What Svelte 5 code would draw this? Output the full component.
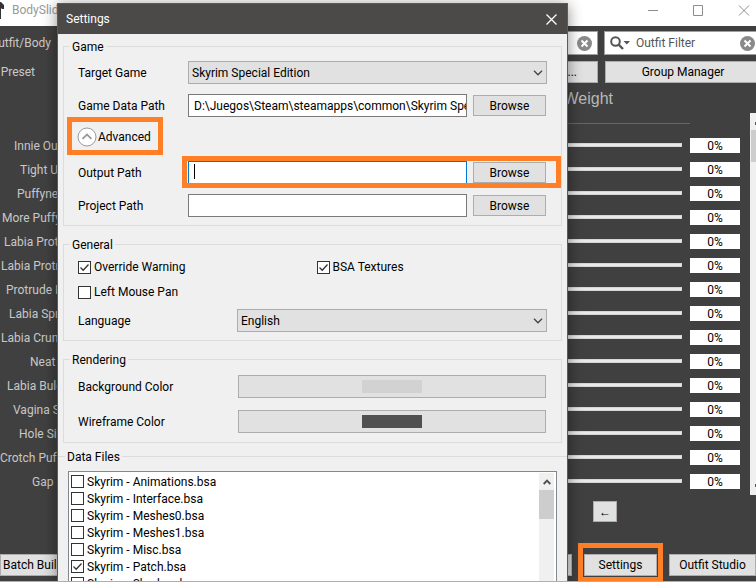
<script>
  const sliders = [
    { name: 'Innie Ou', indent: 14 },
    { name: 'Tight U', indent: 20 },
    { name: 'Puffyne', indent: 17 },
    { name: 'More Puffy', indent: 2 },
    { name: 'Labia Prot', indent: 4 },
    { name: 'Labia Protr', indent: 1 },
    { name: 'Protrude I', indent: 6 },
    { name: 'Labia Spr', indent: 9 },
    { name: 'Labia Crun', indent: 1 },
    { name: 'Neat', indent: 30 },
    { name: 'Labia Bulg', indent: 7 },
    { name: 'Vagina S', indent: 13 },
    { name: 'Hole Si', indent: 19 },
    { name: 'Crotch Puff', indent: 0 },
    { name: 'Gap', indent: 32 }
  ];
  const files = [
    { name: 'Skyrim - Animations.bsa', on: false },
    { name: 'Skyrim - Interface.bsa', on: false },
    { name: 'Skyrim - Meshes0.bsa', on: false },
    { name: 'Skyrim - Meshes1.bsa', on: false },
    { name: 'Skyrim - Misc.bsa', on: false },
    { name: 'Skyrim - Patch.bsa', on: true },
    { name: 'Skyrim - Shaders.bsa', on: false }
  ];
</script>

{#snippet chevron()}
  <svg class="chevron" width="10" height="6" viewBox="0 0 10 6" aria-hidden="true">
    <path d="M1 .8 5 4.8 9 .8" fill="none" stroke="#444" stroke-width="1.3" />
  </svg>
{/snippet}

{#snippet clear()}
  <svg width="15" height="15" viewBox="0 0 15 15" aria-hidden="true">
    <circle cx="7.5" cy="7.5" r="7.5" fill="#8a8a8a" />
    <path d="M4.5 4.5l6 6M10.5 4.5l-6 6" stroke="#fff" stroke-width="2" />
  </svg>
{/snippet}

<div class="screen">
  <main class="app">
    <header class="appbar">
      <svg width="4" height="18" viewBox="0 0 4 18" aria-hidden="true">
        <path d="M0 0h1l3 3v4H2L1 6v11H0z" fill="#333" />
      </svg>
      <span class="apptitle">BodySlide</span>
      <svg class="wincontrols" width="102" height="12" viewBox="0 0 102 12" fill="none" stroke="#8c8c8c" aria-hidden="true">
        <path d="M0 5.5h10M45.500 .5h9v10h-9zM91 .5l10 10M101 .5l-10 10" />
      </svg>
    </header>

    <div class="toprow">
      <span class="side outfit">Outfit/Body</span>
      <div class="search first">
        <input aria-label="Outfit" />
        <button class="bare" aria-label="Clear outfit">{@render clear()}</button>
      </div>
      <div class="search second">
        <svg width="20" height="14" viewBox="0 0 20 14" aria-hidden="true">
          <circle cx="5.500" cy="5.500" r="4.300" fill="none" stroke="#555" stroke-width="2" />
          <path d="M8.500 8.500l4.500 4.500" stroke="#555" stroke-width="2.400" />
          <path d="M13.500 5h6.500l-3.200 3.500z" fill="#555" />
        </svg>
        <input aria-label="Outfit Filter" placeholder="Outfit Filter" />
        <button class="bare" aria-label="Clear filter">{@render clear()}</button>
      </div>
    </div>

    <div class="toprow presets">
      <span class="side preset">Preset</span>
      <button class="btn dots">...</button>
      <button class="btn manager">Group Manager</button>
    </div>

    <h2>Weight</h2>
    <hr />

    <div class="sliders">
      <div class="rows">
        {#each sliders as s, i}
          <div class="slider">
            <label for="s{i}" style:padding-left="{s.indent}px">{s.name}</label>
            <input id="s{i}" type="range" value="0" />
            <input class="pct" aria-label="{s.name} value" value="0%" />
          </div>
        {/each}
      </div>
      <div class="vbar"><i class="tick"></i><i class="thumb"></i><i class="tick low"></i></div>
    </div>

    <button class="btn back" aria-label="Back">←</button>

    <footer>
      <button class="btn batch">Batch Build</button>
      <span class="sliver"></span>
      <span class="marked settings">
        <button class="btn">Settings</button>
      </span>
      <button class="btn studio">Outfit Studio</button>
    </footer>
  </main>

  <section class="dialog" role="dialog" aria-label="Settings">
    <header class="bar">
      <span>Settings</span>
      <button class="bare" aria-label="Close">
        <svg width="11" height="11" viewBox="0 0 11 11" aria-hidden="true">
          <path d="M.5 .5l10 10M10.500 .5l-10 10" stroke="#fff" stroke-width="1.300" />
        </svg>
      </button>
    </header>

    <div class="body">
      <fieldset class="game">
        <legend>Game</legend>
        <div class="row">
          <label for="game">Target Game</label>
          <span class="select">
            <select id="game"><option>Skyrim Special Edition</option></select>
            {@render chevron()}
          </span>
        </div>
        <div class="row">
          <label for="data">Game Data Path</label>
          <input id="data" class="text" value="D:\Juegos\Steam\steamapps\common\Skyrim Spe" />
          <button class="btn browse">Browse</button>
        </div>
        <div class="row expand">
          <span class="marked advanced">
            <button class="bare expander">
              <svg width="20" height="20" viewBox="0 0 20 20" fill="none" aria-hidden="true">
                <circle cx="10" cy="10" r="9" fill="#fff" stroke="#999" />
                <path d="M5.500 11.800 10 7.500l4.500 4.300" stroke="#999" stroke-width="1.800" />
              </svg>
              Advanced
            </button>
          </span>
        </div>
        <div class="row marked output">
          <label for="out">Output Path</label>
          <span class="focusbox">
            <input id="out" class="text" />
            <i class="caret"></i>
          </span>
          <button class="btn browse">Browse</button>
        </div>
        <div class="row">
          <label for="proj">Project Path</label>
          <input id="proj" class="text" />
          <button class="btn browse">Browse</button>
        </div>
      </fieldset>

      <fieldset class="general">
        <legend>General</legend>
        <div class="checks">
          <label class="check"><input type="checkbox" checked />Override Warning</label>
          <label class="check"><input type="checkbox" checked />BSA Textures</label>
          <label class="check"><input type="checkbox" />Left Mouse Pan</label>
        </div>
        <div class="row wide">
          <label for="lang">Language</label>
          <span class="select">
            <select id="lang"><option>English</option></select>
            {@render chevron()}
          </span>
        </div>
      </fieldset>

      <fieldset class="rendering">
        <legend>Rendering</legend>
        <div class="row wide">
          <label for="bg">Background Color</label>
          <button id="bg" class="btn color"><i class="swatch light"></i></button>
        </div>
        <div class="row wide">
          <label for="wire">Wireframe Color</label>
          <button id="wire" class="btn color"><i class="swatch dark"></i></button>
        </div>
      </fieldset>

      <fieldset class="data">
        <legend>Data Files</legend>
        <div class="list">
          <div class="files">
            {#each files as f}
              <label class="check"><input type="checkbox" checked={f.on} />{f.name}</label>
            {/each}
          </div>
          <div class="scroll">
            <svg width="8" height="6" viewBox="0 0 8 6" aria-hidden="true">
              <path d="M.7 5 4 1.700 7.300 5" fill="none" stroke="#505050" stroke-width="1.900" />
            </svg>
            <i></i>
          </div>
        </div>
      </fieldset>
    </div>
  </section>
</div>

<style>
  :global(body) { margin: 0; overflow: hidden; }
  .screen, .screen * { box-sizing: border-box; }
  .screen {
    position: relative;
    height: 100vh;
    overflow: hidden;
    font: 12px/16px Roboto, 'Open Sans', sans-serif;
    color: #000;
    border-bottom: 1px solid #a9b0ba;
  }
  button, input, select { font: inherit; color: inherit; margin: 0; border-radius: 0; }
  .app {
    height: 100%;
    display: flex;
    flex-direction: column;
    background: #404040;
    color: #c8c8c8;
  }
  .appbar {
    height: 26px;
    flex: none;
    display: flex;
    padding: 2px 6px 0 0;
    background: #fff;
    color: #999;
  }
  .apptitle { margin-left: 8px; flex: 1; }
  .wincontrols { margin-top: 3px; }
  .toprow { display: flex; height: 24px; margin-top: 5px; flex: none; }
  .presets { height: 22px; margin-top: 6px; }
  .side { display: flex; justify-content: flex-end; flex: none; line-height: 24px; white-space: nowrap; }
  .outfit { width: 51px; }
  .preset { width: 35px; line-height: 22px; }
  .search {
    display: flex;
    align-items: center;
    background: #fff;
    border: 1px solid #a0a0a0;
    color: #555;
    padding: 0 5px;
  }
  .search input { flex: 1; min-width: 0; border: 0; padding: 0; background: none; outline: none; }
  .search input::placeholder { color: #555; opacity: 1; }
  .first { flex: 1; margin: 0 6px; }
  .second { width: 152px; border-right: 0; padding: 0 1px 0 5px; gap: 6px; }
  .bare { border: 0; padding: 0; background: none; display: flex; align-items: center; }
  .btn {
    border: 1px solid #adadad;
    background: #e1e1e1;
    color: #000;
    padding: 0;
    text-align: center;
    white-space: nowrap;
  }
  .dots { flex: 1; margin: 0 7px 0 22px; text-align: right; padding-right: 20px; }
  .manager { width: 151px; border-right: 0; padding-left: 4px; }
  h2 {
    margin: 7px 0 0;
    padding-right: 143px;
    font: 16px/18px 'Liberation Sans', sans-serif;
    text-align: right;
    color: #b8b8b8;
  }
  hr { width: 632px; height: 1px; border: 0; margin: 15px 66px 0 auto; background: #666; flex: none; }
  .sliders { display: flex; margin-top: -11px; flex: none; }
  .rows { flex: 1; padding-top: 20px; }
  .slider { display: flex; align-items: center; height: 24px; }
  .slider label { width: 70px; padding-top: 2px; white-space: nowrap; flex: none; }
  .slider input[type='range'] {
    appearance: none;
    flex: 1;
    min-width: 0;
    height: 4px;
    margin: 0 8px 0 20px;
    background: #e7eaea;
    border: 1px solid #d6d6d6;
  }
  .slider input[type='range']::-webkit-slider-thumb { appearance: none; width: 0; height: 0; }
  .pct {
    width: 50px;
    height: 15px;
    margin-right: 10px;
    border: 0;
    padding: 1px 0 0;
    background: #fff;
    color: #000;
    text-align: center;
    line-height: 14px;
  }
  .vbar {
    width: 6px;
    height: 382px;
    background: #f0f0f0;
    display: flex;
    flex-direction: column;
    align-items: flex-end;
  }
  .tick { width: 1px; height: 3px; margin: 9px 0 5px; background: #555; }
  .thumb { width: 5px; height: 32px; background: #cdcdcd; }
  .low { margin: auto 0 8px; }
  .back { width: 24px; height: 21px; margin: 6px 139px 0 auto; flex: none; line-height: 16px; }
  footer { display: flex; height: 22px; margin-top: 32px; flex: none; }
  .batch { width: 70px; padding-left: 2px; text-align: left; }
  .sliver { flex: 1; background: #e1e1e1; border: 1px solid #adadad; margin-left: 400px; }
  .settings { width: 73px; margin: 0 12px; display: flex; flex: none; }
  .settings .btn { flex: 1; }
  .studio { width: 87px; }

  .marked { position: relative; }
  .marked::after { content: ''; position: absolute; border: 5px solid #ff7f27; pointer-events: none; }
  .settings::after { inset: -11px -6px -6px; }
  .advanced::after { inset: -10px -12px -8px -11px; }
  .output::after { inset: -5px -14px -4px 104px; }

  .dialog {
    position: absolute;
    inset: 3px 188px 0 57px;
    display: flex;
    flex-direction: column;
    background: #f0f0f0;
    border: 1px solid #5c5b5a;
    border-bottom: 0;
    box-shadow: 0 2px 14px rgba(0, 0, 0, 0.45);
    overflow: hidden;
  }
  .bar {
    height: 30px;
    flex: none;
    display: flex;
    align-items: center;
    justify-content: space-between;
    padding: 0 10px 0 8px;
    background: #4b4a48;
    color: #fff;
  }
  .body { padding: 3px 5px 0; display: flex; flex-direction: column; gap: 9px; }
  fieldset {
    min-width: 0;
    margin: 0;
    border: 1px solid #dcdcdc;
    padding: 6px 14px 8px;
    display: flex;
    flex-direction: column;
    gap: 10px;
  }
  legend { padding: 2px 2px 0; margin-left: -8px; }
  .row { display: flex; align-items: center; height: 23px; }
  .row > label { width: 110px; flex: none; }
  .wide > label { width: 159px; }
  .text {
    flex: 1;
    min-width: 0;
    height: 23px;
    border: 1px solid #7a7a7a;
    background: #fff;
    padding: 0 0 0 5px;
    outline: none;
  }
  .focusbox { flex: 1; display: flex; position: relative; }
  .focusbox .text { border-color: #0078d7; }
  .caret { position: absolute; left: 6px; top: 3px; width: 1px; height: 15px; background: #000; }
  .browse { width: 73px; height: 21px; margin: 0 1px 0 6px; flex: none; line-height: 16px; }
  .select { position: relative; flex: 1; display: flex; }
  select {
    appearance: none;
    flex: 1;
    height: 23px;
    border: 1px solid #adadad;
    background: #e1e1e1;
    padding: 0 20px 0 3px;
    outline: none;
  }
  .chevron { position: absolute; right: 4px; top: 9px; }
  .expand { height: 24px; align-items: flex-start; }
  .expander { gap: 1px; margin-left: -1px; }
  .general { gap: 9px; }
  .checks { display: grid; grid-template-columns: 1fr 1fr; gap: 9px 8px; }
  .check { display: flex; align-items: center; gap: 3px; height: 16px; white-space: nowrap; }
  .check input {
    appearance: none;
    width: 13px;
    height: 13px;
    border: 1px solid #333;
    background: #fff;
    flex: none;
  }
  .check input:checked {
    background: #fff
      url("data:image/svg+xml,%3Csvg xmlns='http://www.w3.org/2000/svg' viewBox='0 0 11 11'%3E%3Cpath d='M1.500 5.500l2.700 2.700 5.300-5.700' fill='none' stroke='%23333' stroke-width='1.300'/%3E%3C/svg%3E");
  }
  .rendering { gap: 12px; padding: 7px 15px 9px 14px; }
  .rendering .row > label { width: 160px; }
  .color { flex: 1; height: 23px; display: flex; align-items: center; justify-content: center; }
  .swatch { width: 60px; height: 13px; }
  .light { background: #d2d2d2; }
  .dark { background: #505050; }
  .data { margin: -5px -6px 0; padding: 6px 10px 0; }
  .data legend { margin-left: -3px; }
  .list { display: flex; border: 1px solid #828790; background: #fff; height: 260px; padding: 1px 2px 0; }
  .files { flex: 1; }
  .files .check { height: 17px; }
  .scroll { width: 15px; background: #f0f0f0; display: flex; flex-direction: column; align-items: center; }
  .scroll svg { margin: 6px 0 5px; }
  .scroll i { width: 15px; height: 29px; background: #cdcdcd; }
</style>
